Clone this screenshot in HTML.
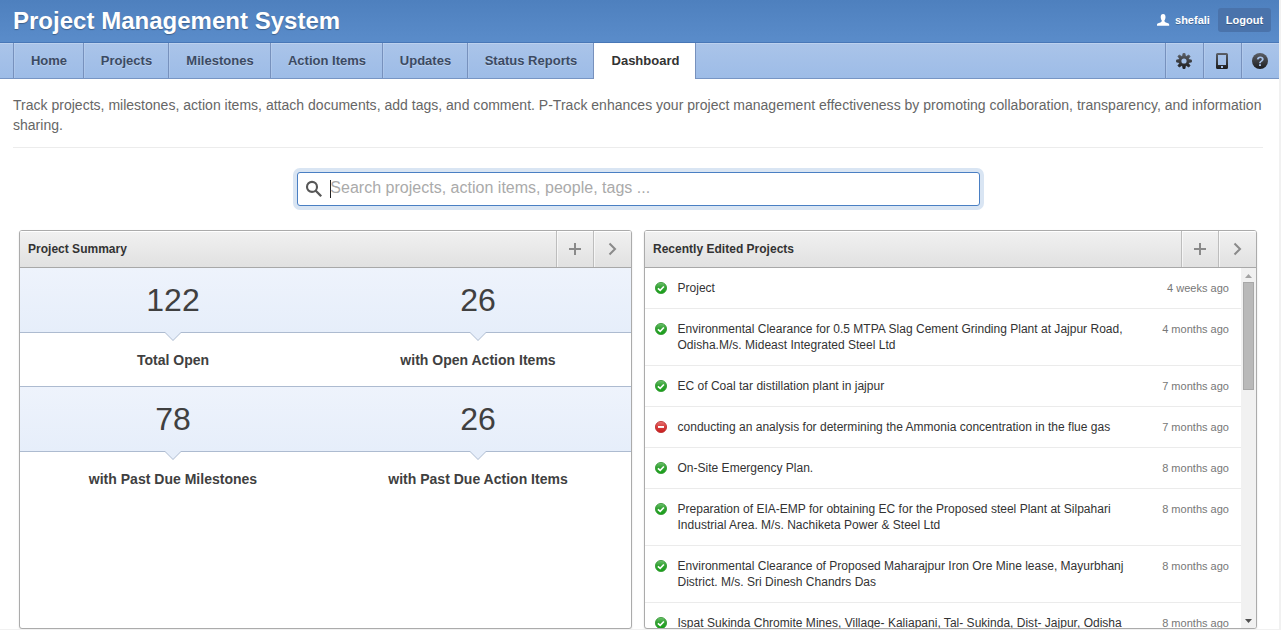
<!DOCTYPE html>
<html>
<head>
<meta charset="utf-8">
<title>Project Management System</title>
<style>
*{box-sizing:border-box;margin:0;padding:0}
html,body{width:1281px;height:630px;overflow:hidden;background:#fff}
body{font-family:"Liberation Sans",sans-serif;color:#333;position:relative;letter-spacing:.0135px}
#edge{position:absolute;left:1279px;top:0;width:2px;height:630px;background:#f1f1f1;z-index:50}
#edgeb{position:absolute;left:0;top:629px;width:1281px;height:1px;background:#f1f1f1;z-index:50}
#page{position:absolute;left:0;top:0;width:1279px;height:630px;overflow:hidden}
#hdr{position:absolute;left:0;top:0;width:1279px;height:43px;background:linear-gradient(#4e80be,#5a8cca);border-bottom:1px solid #4877b7}
#hdr h1{position:absolute;left:13px;top:7px;font-size:24px;line-height:28px;font-weight:bold;color:#fff;text-shadow:0 1px 1px rgba(0,0,0,.3);white-space:nowrap}
#user{position:absolute;left:1175px;top:13px;font-size:11px;line-height:14px;font-weight:bold;color:#fff;text-shadow:0 1px 0 rgba(0,0,0,.25)}
#uicon{position:absolute;left:1156.8px;top:14.1px;width:13px;height:13px}
#logout{position:absolute;left:1218px;top:8px;width:53px;height:24px;border-radius:3px;background:#4a73ab;color:#fff;font-size:11px;font-weight:bold;line-height:24px;text-align:center;text-shadow:0 1px 0 rgba(0,0,0,.25)}
#nav{position:absolute;left:0;top:43px;width:1279px;height:36px;background:linear-gradient(#aac4e9,#9dbce7);border-bottom:1px solid #7795c4;box-shadow:inset 0 1px 0 rgba(255,255,255,.22)}
.tab{position:absolute;top:0;height:35px;padding-left:1px;border-left:1px solid #7791bd;box-shadow:inset 1px 0 0 rgba(255,255,255,.13);font-size:13px;font-weight:bold;color:#3b4a63;line-height:35px;text-align:center;text-shadow:0 1px 0 rgba(255,255,255,.3)}
.tab.act{background:#fff;color:#333;height:36px;border-left:1px solid #7791bd;border-right:1px solid #7791bd;padding-left:2px;box-shadow:none;text-shadow:none}
.ibtn{position:absolute;top:0;height:35px;width:38px;border-left:1px solid #7791bd;box-shadow:inset 1px 0 0 rgba(255,255,255,.13)}
.ibtn svg{position:absolute;left:10px;top:10px;width:16px;height:16px}
#desc{position:absolute;left:13px;top:95px;width:1255px;font-size:14px;line-height:20px;color:#666}
#hr{position:absolute;left:13px;top:147px;width:1250px;height:1px;background:#ececec}
#search{position:absolute;left:297px;top:172px;width:683px;height:34px;border:1px solid #4a7fc3;border-radius:3px;box-shadow:0 0 0 4px #d9e5f3;background:#fff}
#search .ph{position:absolute;left:32.3px;top:5px;font-size:16px;line-height:20px;color:#aaa}
#search .caret{position:absolute;left:32px;top:7px;width:1px;height:18px;background:#222}
#search svg{position:absolute;left:8px;top:7px;width:17px;height:17px;overflow:visible}
.panel{position:absolute;top:230px;height:399px;border:1px solid #ababab;border-radius:3px;background:#fff;box-shadow:0 1px 2px rgba(0,0,0,.12);overflow:hidden}
.phd{position:absolute;left:0;top:0;right:0;height:37px;background:linear-gradient(#f1f1f1,#e1e1e1);border-bottom:1px solid #a8a8a8;box-shadow:inset 0 1px 0 #fff}
.phd .t{position:absolute;left:8px;top:11px;font-size:12px;line-height:14px;font-weight:bold;color:#333}
.pbtn{position:absolute;top:0;width:38px;height:36px;border-left:1px solid #bdbdbd;box-shadow:inset 1px 0 0 rgba(255,255,255,.6)}
.pbtn svg{position:absolute;left:11px;top:11px;width:14px;height:14px}.pbtn.b2 svg{left:11px}
.srow{position:absolute;left:0;width:611px;height:65px;background:linear-gradient(#eef3fc,#e6eefa);border-bottom:1px solid #adbbd0}
.num{position:absolute;top:0;width:306px;height:64px;text-align:center;font-size:32px;line-height:64px;color:#404040}
.lbl{position:absolute;width:306px;text-align:center;font-size:14px;line-height:18px;font-weight:bold;color:#404040}
.tri{position:absolute;width:0;height:0;border-left:8px solid transparent;border-right:8px solid transparent;border-top:8px solid #adbbd0}
.tri i{position:absolute;left:-8px;top:-9.500px;width:0;height:0;border-left:8px solid transparent;border-right:8px solid transparent;border-top:8px solid #e6eefa}
.sline{position:absolute;left:0;width:611px;height:1px;background:#adbbd0}
.row{position:absolute;left:0;width:596px;border-bottom:1px solid #ebebeb}
.row .tx{position:absolute;left:32.5px;top:12px;width:470px;font-size:12px;line-height:16px;color:#333}
.row .tm{position:absolute;right:12px;top:13px;font-size:11px;line-height:14px;color:#777;white-space:nowrap}
.row svg{position:absolute;left:10px;top:14px;width:12px;height:12px}
#sb{position:absolute;left:596px;top:37px;width:15px;height:360px;background:#f1f1f1}
#sb .au{position:absolute;left:4px;top:6px;width:7px;height:4px}#sb .ad{position:absolute;left:4px;top:351px;width:7px;height:4px}#sb .th{position:absolute;left:2px;top:14px;width:11px;height:108px;background:#b9b9b9;border:1px solid #a8a8a8}
</style>
</head>
<body>
<div id="page">
<svg width="0" height="0" style="position:absolute"><defs>
<linearGradient id="gg" x1="0" y1="0" x2="0" y2="1"><stop offset="0" stop-color="#6fc26f"/><stop offset="0.45" stop-color="#33a233"/><stop offset="1" stop-color="#15a015"/></linearGradient>
<linearGradient id="gr" x1="0" y1="0" x2="0" y2="1"><stop offset="0" stop-color="#e97878"/><stop offset="0.45" stop-color="#d84040"/><stop offset="1" stop-color="#c81c1c"/></linearGradient>
<symbol id="ok" viewBox="0 0 12 12"><circle cx="6" cy="6" r="5.600" fill="url(#gg)" stroke="#2f962f" stroke-width="0.800"/><path d="M2.900 6.300L5.200 8.300L8.900 4.500" fill="none" stroke="#fff" stroke-width="1.700"/></symbol>
<symbol id="no" viewBox="0 0 12 12"><circle cx="6" cy="6" r="5.600" fill="url(#gr)" stroke="#b92a2a" stroke-width="0.800"/><rect x="3" y="5" width="6" height="1.900" fill="#fff"/></symbol>
</defs></svg>

<div id="hdr">
<h1>Project Management System</h1>
<svg id="uicon" viewBox="0 0 13 13"><path fill="#fff" d="M6.100 0C7.700 0 8.500 1.200 8.500 3C8.500 4.600 8 5.800 7.400 6.500C7.300 7.400 7.600 7.900 8.800 8.400L11 9.300C11.800 9.600 12.200 10 12.200 10.800L12.200 11.800L0 11.800L0 10.800C0 10 .4 9.600 1.200 9.300L3.400 8.400C4.600 7.900 4.900 7.400 4.800 6.500C4.200 5.800 3.700 4.600 3.700 3C3.700 1.200 4.500 0 6.100 0Z"/></svg>
<div id="user">shefali</div>
<div id="logout">Logout</div>
</div>
<div id="nav">
<div class="tab" style="left:13px;width:70px">Home</div>
<div class="tab" style="left:83px;width:85px">Projects</div>
<div class="tab" style="left:168px;width:102px">Milestones</div>
<div class="tab" style="left:270px;width:112px">Action Items</div>
<div class="tab" style="left:382px;width:85px">Updates</div>
<div class="tab" style="left:467px;width:126px">Status Reports</div>
<div class="tab act" style="left:593px;width:103px">Dashboard</div>
<div class="ibtn" style="left:1165px"><svg viewBox="0 0 16 16"><defs><linearGradient id="g1" x1="0" y1="0" x2="0" y2="1"><stop offset="0" stop-color="#5b5f66"/><stop offset="1" stop-color="#1c1c1e"/></linearGradient></defs><path fill="url(#g1)" fill-rule="evenodd" d="M6.54 2.91L7.00 0.36L9.00 0.36L9.46 2.91L10.57 3.36L12.69 1.90L14.10 3.31L12.64 5.43L13.09 6.54L15.64 7.00L15.64 9.00L13.09 9.46L12.64 10.57L14.10 12.69L12.69 14.10L10.57 12.64L9.46 13.09L9.00 15.64L7.00 15.64L6.54 13.09L5.43 12.64L3.31 14.10L1.90 12.69L3.36 10.57L2.91 9.46L0.36 9.00L0.36 7.00L2.91 6.54L3.36 5.43L1.90 3.31L3.31 1.90L5.43 3.36Z M8 5.400a2.600 2.600 0 1 0 0 5.200a2.600 2.600 0 1 0 0-5.200Z"/><path fill="none" stroke="url(#g1)" stroke-width="0.7" stroke-linejoin="round" d="M6.54 2.91L7.00 0.36L9.00 0.36L9.46 2.91L10.57 3.36L12.69 1.90L14.10 3.31L12.64 5.43L13.09 6.54L15.64 7.00L15.64 9.00L13.09 9.46L12.64 10.57L14.10 12.69L12.69 14.10L10.57 12.64L9.46 13.09L9.00 15.64L7.00 15.64L6.54 13.09L5.43 12.64L3.31 14.10L1.90 12.69L3.36 10.57L2.91 9.46L0.36 9.00L0.36 7.00L2.91 6.54L3.36 5.43L1.90 3.31L3.31 1.90L5.43 3.36Z"/></svg></div>
<div class="ibtn" style="left:1203px"><svg viewBox="0 0 16 16"><path fill="url(#g1)" fill-rule="evenodd" d="M3.500 0h9a1.500 1.500 0 0 1 1.500 1.500v13a1.500 1.500 0 0 1-1.500 1.500h-9a1.500 1.500 0 0 1-1.500-1.500v-13a1.500 1.500 0 0 1 1.500-1.500ZM4 2v10h8v-10ZM7 13v2h2v-2Z"/></svg></div>
<div class="ibtn" style="left:1241px"><svg viewBox="0 0 16 16"><circle cx="8" cy="8" r="8" fill="url(#g1)"/><path transform="translate(4.13 13) scale(0.00664 -0.00664)" fill="#a8c2e9" d="M1133 1026Q1133 929 1089.5 852.0Q1046 775 927 690L851 635Q783 586 749.5 536.0Q716 486 713 426H446Q452 528 503.5 608.0Q555 688 655 758Q762 832 806.0 888.5Q850 945 850 1014Q850 1102 792.5 1153.0Q735 1204 629 1204Q528 1204 459.5 1145.0Q391 1086 379 989L94 1001Q121 1204 261.0 1317.0Q401 1430 625 1430Q862 1430 997.5 1322.5Q1133 1215 1133 1026ZM438 0V270H727V0Z"/></svg></div>
</div>
<div id="desc">Track projects, milestones, action items, attach documents, add tags, and comment. P-Track enhances your project management effectiveness by promoting collaboration, transparency, and information sharing.</div>
<div id="hr"></div>
<div id="search">
<svg viewBox="0 0 17 17"><circle cx="6" cy="6.900" r="5" fill="none" stroke="#575757" stroke-width="2.100"/><path d="M9.300 10.300L15.200 16.300" stroke="#575757" stroke-width="2.300"/></svg>
<div class="caret"></div>
<div class="ph">Search projects, action items, people, tags ...</div>
</div>

<div class="panel" style="left:19px;width:613px">
<div class="phd"><div class="t">Project Summary</div>
<div class="pbtn" style="left:536px;width:37px"><svg viewBox="0 0 14 14"><path d="M7 1v12M1 7h12" stroke="#8a8a8a" stroke-width="2" fill="none"/></svg></div>
<div class="pbtn b2" style="left:573px"><svg viewBox="0 0 14 14"><path d="M4.500 1.500l5.500 5.500-5.500 5.500" stroke="#8a8a8a" stroke-width="2" fill="none"/></svg></div>
</div>
<div class="srow" style="top:37px"><div class="num" style="left:0">122</div><div class="num" style="left:305px">26</div></div>
<div class="tri" style="left:145px;top:102px"><i></i></div>
<div class="tri" style="left:450px;top:102px"><i></i></div>
<div class="lbl" style="left:0;top:120px">Total Open</div>
<div class="lbl" style="left:305px;top:120px">with Open Action Items</div>
<div class="sline" style="top:155px"></div>
<div class="srow" style="top:156px"><div class="num" style="left:0">78</div><div class="num" style="left:305px">26</div></div>
<div class="tri" style="left:145px;top:221px"><i></i></div>
<div class="tri" style="left:450px;top:221px"><i></i></div>
<div class="lbl" style="left:0;top:239px">with Past Due Milestones</div>
<div class="lbl" style="left:305px;top:239px">with Past Due Action Items</div>
</div>

<div class="panel" style="left:644px;width:613px">
<div class="phd"><div class="t">Recently Edited Projects</div>
<div class="pbtn" style="left:536px;width:37px"><svg viewBox="0 0 14 14"><path d="M7 1v12M1 7h12" stroke="#8a8a8a" stroke-width="2" fill="none"/></svg></div>
<div class="pbtn b2" style="left:573px"><svg viewBox="0 0 14 14"><path d="M4.500 1.500l5.500 5.500-5.500 5.500" stroke="#8a8a8a" stroke-width="2" fill="none"/></svg></div>
</div>
<div id="list">
<div class="row" style="top:37px;height:41px"><svg><use href="#ok"/></svg><div class="tx">Project</div><div class="tm">4 weeks ago</div></div>
<div class="row" style="top:78px;height:57px"><svg><use href="#ok"/></svg><div class="tx">Environmental Clearance for 0.5 MTPA Slag Cement Grinding Plant at Jajpur Road, Odisha.M/s. Mideast Integrated Steel Ltd</div><div class="tm">4 months ago</div></div>
<div class="row" style="top:135px;height:41px"><svg><use href="#ok"/></svg><div class="tx">EC of Coal tar distillation plant in jajpur</div><div class="tm">7 months ago</div></div>
<div class="row" style="top:176px;height:41px"><svg><use href="#no"/></svg><div class="tx">conducting an analysis for determining the Ammonia concentration in the flue gas</div><div class="tm">7 months ago</div></div>
<div class="row" style="top:217px;height:41px"><svg><use href="#ok"/></svg><div class="tx">On-Site Emergency Plan.</div><div class="tm">8 months ago</div></div>
<div class="row" style="top:258px;height:57px"><svg><use href="#ok"/></svg><div class="tx">Preparation of EIA-EMP for obtaining EC for the Proposed steel Plant at Silpahari Industrial Area. M/s. Nachiketa Power &amp; Steel Ltd</div><div class="tm">8 months ago</div></div>
<div class="row" style="top:315px;height:57px"><svg><use href="#ok"/></svg><div class="tx">Environmental Clearance of Proposed Maharajpur Iron Ore Mine lease, Mayurbhanj District. M/s. Sri Dinesh Chandrs Das</div><div class="tm">8 months ago</div></div>
<div class="row" style="top:372px;height:41px"><svg><use href="#ok"/></svg><div class="tx">Ispat Sukinda Chromite Mines, Village- Kaliapani, Tal- Sukinda, Dist- Jajpur, Odisha</div><div class="tm">8 months ago</div></div>
</div>
<div id="sb"><svg class="au" viewBox="0 0 7 4"><path d="M0 4L3.500 0L7 4Z" fill="#a3a3a3"/></svg><div class="th"></div><svg class="ad" viewBox="0 0 7 4"><path d="M0 0L3.500 4L7 0Z" fill="#505050"/></svg></div>
</div>
</div>
<div id="edge"></div><div id="edgeb"></div>
</body>
</html>
